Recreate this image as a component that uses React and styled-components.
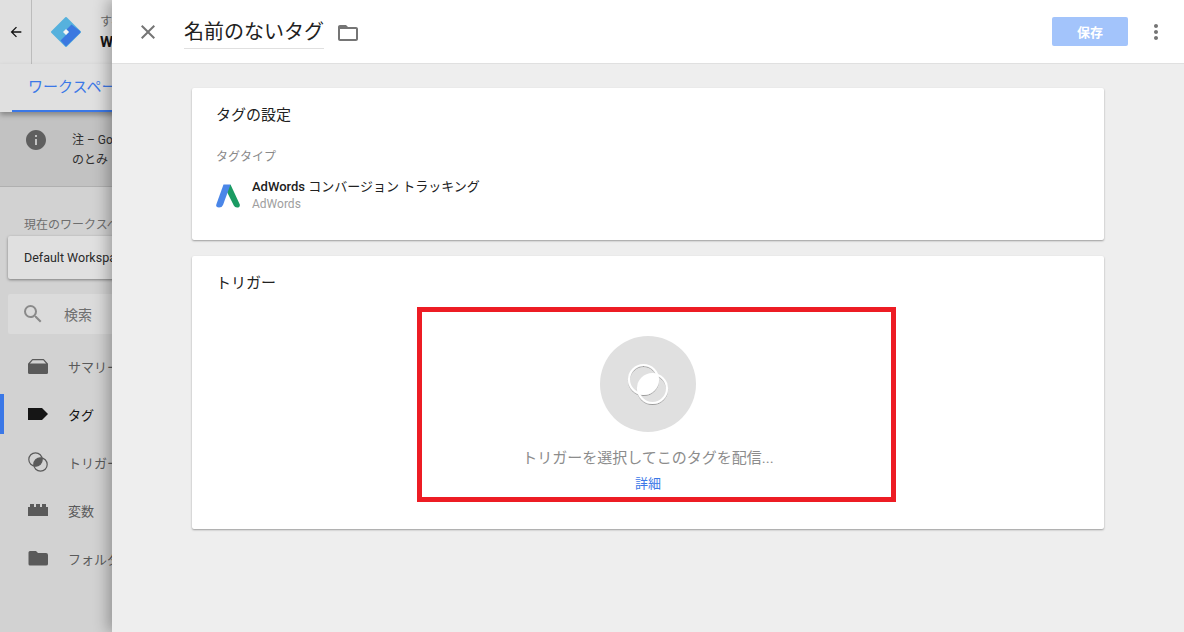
import React from "react";
import styled, { createGlobalStyle } from "styled-components";

const GlobalStyle = createGlobalStyle`
  html, body {
    margin: 0;
    padding: 0;
    height: 100%;
    overflow: hidden;
  }
  body {
    font-family: Roboto, "Noto Sans CJK JP", sans-serif;
    color: #212121;
  }
  #root {
    height: 100%;
  }
`;

const Page = styled.div`
  position: relative;
  width: 1184px;
  height: 632px;
  overflow: hidden;
  background: #d2d2d2;
`;

const TopBar = styled.div`
  display: flex;
  align-items: center;
  height: 64px;
  background: #e0e0e0;
`;

const BackCell = styled.div`
  display: flex;
  align-items: center;
  justify-content: center;
  width: 31px;
  height: 64px;
  border-right: 1px solid #bcbcbc;
  color: #111;
`;

const Logo = styled.div`
  display: flex;
  margin-left: 18px;
  margin-right: 18px;
`;

const Crumbs = styled.div`
  display: flex;
  flex-direction: column;
  gap: 3px;
  white-space: nowrap;
`;

const CrumbTop = styled.div`
  font-size: 12px;
  line-height: 16px;
  color: #6a6a6a;
`;

const CrumbName = styled.div`
  font-size: 15px;
  line-height: 18px;
  font-weight: 700;
  color: #151515;
`;

const Tabs = styled.div`
  height: 48px;
  background: #e0e0e0;
  box-shadow: 0 3px 5px rgba(0, 0, 0, 0.3);
  position: relative;
  padding-left: 12px;
`;

const Tab = styled.div`
  width: 180px;
  height: 48px;
  box-sizing: border-box;
  padding: 13px 0 0 16px;
  font-size: 15px;
  line-height: 20px;
  color: #3b78e7;
  border-bottom: 2px solid #3b78e7;
  white-space: nowrap;
`;

const Notice = styled.div`
  display: flex;
  height: 75px;
  box-sizing: border-box;
  padding: 16px 0 0 24px;
  background: #c2c2c2;
  border-bottom: 1px solid #b0b0b0;
  white-space: nowrap;
`;

const NoticeText = styled.div`
  margin-left: 24px;
  padding-top: 2px;
  font-size: 12px;
  line-height: 20px;
  color: #303030;
`;

const Side = styled.div`
  padding: 29px 0 0;
`;

const SideLabel = styled.div`
  padding-left: 24px;
  font-size: 12px;
  line-height: 18px;
  color: #6e6e6e;
  white-space: nowrap;
`;

const WorkspaceCard = styled.div`
  margin: 2px 0 0 8px;
  width: 300px;
  height: 43px;
  box-sizing: border-box;
  padding-left: 16px;
  padding-bottom: 1px;
  display: flex;
  align-items: center;
  background: #e0e0e0;
  border-radius: 2px;
  box-shadow: 0 1px 3px rgba(0, 0, 0, 0.4);
  font-size: 12.5px;
  color: #2a2a2a;
  white-space: nowrap;
`;

const SearchBox = styled.div`
  margin: 15px 0 0 8px;
  width: 300px;
  height: 40px;
  box-sizing: border-box;
  display: flex;
  align-items: center;
  gap: 19px;
  padding-left: 13px;
  background: #dbdbdb;
  border-radius: 2px;
  font-size: 14px;
  color: #6e6e6e;
`;

const NavList = styled.div`
  margin-top: 8px;
`;

const NavItem = styled.div`
  position: relative;
  display: flex;
  align-items: center;
  gap: 20px;
  height: 48px;
  padding-left: 28px;
  font-size: 13px;
  color: ${(p) => (p.$active ? "#151515" : "#5a5a5a")};
  white-space: nowrap;

  &::before {
    content: "";
    display: ${(p) => (p.$active ? "block" : "none")};
    position: absolute;
    left: 0;
    top: 4px;
    width: 4px;
    height: 40px;
    background: #3b78e7;
  }
`;

const Panel = styled.div`
  position: absolute;
  top: 0;
  right: 0;
  bottom: 0;
  left: 112px;
  display: flex;
  flex-direction: column;
  background: #eeeeee;
  box-shadow: -4px 0 14px rgba(0, 0, 0, 0.3);
`;

const PanelHeader = styled.div`
  display: flex;
  align-items: center;
  height: 64px;
  box-sizing: border-box;
  padding: 0 16px 0 24px;
  background: #fff;
  border-bottom: 1px solid #e0e0e0;
`;

const IconButton = styled.div`
  display: flex;
  align-items: center;
  justify-content: center;
  width: 24px;
  height: 24px;
  color: ${(p) => p.$color || "#757575"};
`;

const TagName = styled.div`
  margin-left: 24px;
  margin-top: -1px;
  width: 140px;
  height: 34px;
  font-size: 20px;
  line-height: 36px;
  color: #212121;
  border-bottom: 1px solid #e0e0e0;
`;

const FolderIcon = styled(IconButton)`
  margin-left: 12px;
  margin-top: 2px;
`;

const SaveButton = styled.div`
  margin-left: auto;
  margin-right: 16px;
  display: flex;
  align-items: center;
  justify-content: center;
  width: 76px;
  height: 29px;
  background: #a3c4fb;
  border-radius: 2px;
  color: #fff;
  font-size: 13px;
  font-weight: 700;
`;

const PanelBody = styled.div`
  flex: 1;
  display: flex;
  flex-direction: column;
  gap: 16px;
  padding: 24px 80px;
`;

const Card = styled.div`
  position: relative;
  height: ${(p) => p.$height}px;
  box-sizing: border-box;
  padding: 17px 24px;
  background: #fff;
  border-radius: 2px;
  box-shadow: 0 1px 2px rgba(0, 0, 0, 0.35);
`;

const CardTitle = styled.div`
  font-size: 15px;
  line-height: 20px;
  color: #212121;
`;

const FieldLabel = styled.div`
  margin-top: 24px;
  font-size: 12px;
  line-height: 16px;
  color: #8a8a8a;
`;

const TagType = styled.div`
  display: flex;
  align-items: center;
  gap: 12px;
  margin-top: 13px;
`;

const TagTypeIcon = styled.div`
  display: flex;
  margin-top: 2px;
`;

const TagTypeName = styled.div`
  font-size: 13px;
  line-height: 17px;
  color: #212121;

  b {
    font-weight: 500;
  }
`;

const TagTypeVendor = styled.div`
  margin-top: 1px;
  font-size: 12px;
  line-height: 16px;
  color: #9e9e9e;
`;

const EmptyState = styled.div`
  display: flex;
  flex-direction: column;
  align-items: center;
  margin-top: 43px;
`;

const EmptyCircle = styled.div`
  display: flex;
  align-items: center;
  justify-content: center;
  width: 96px;
  height: 96px;
  border-radius: 50%;
  background: #e0e0e0;
`;

const EmptyText = styled.div`
  margin-top: 15px;
  font-size: 15px;
  line-height: 22px;
  color: #8c8c8c;
`;

const MoreLink = styled.a`
  margin-top: 6px;
  font-size: 13px;
  line-height: 18px;
  color: #3b78e7;
`;

const Highlight = styled.div`
  position: absolute;
  left: 225px;
  top: 51px;
  width: 479px;
  height: 195px;
  box-sizing: border-box;
  border: 5px solid #ed1c24;
  pointer-events: none;
`;

const Icon = ({ d, size = 24, color = "currentColor" }) => (
  <svg width={size} height={size} viewBox="0 0 24 24" fill={color}>
    <path d={d} />
  </svg>
);

const TagManagerLogo = () => (
  <svg width="32" height="32" viewBox="0 0 32 32">
    <path d="M16 2 L30 16 L16 30 L2 16 Z" fill="#56b1dd" stroke="#56b1dd" strokeWidth="2" strokeLinejoin="round" />
    <path d="M21.5 8.5 L16.5 13.5 L19 16 L16 19 L10.5 24.5 L15 29.5 Q16 31 17 29.5 L30 17 Q31 16 30 15 Z" fill="#3b78e0" />
    <path d="M16 13 L19 16 L16 19 L13 16 Z" fill="#f4f4f4" />
  </svg>
);

const AdWordsLogo = () => (
  <svg width="24" height="24" viewBox="0 0 24 24">
    <path d="M14.5 0.5 L23.8 20.5 Q24.2 23.5 21 23.5 Q18.8 23.5 17.8 21.5 L10 6 Z" fill="#1a9b62" />
    <path d="M7.5 0.5 H14.5 L7 21 Q6 23.5 3 23.5 Q-0.2 23.5 0.3 20.5 Z" fill="#4a86e8" />
  </svg>
);

const SummaryIcon = () => (
  <svg width="20" height="15" viewBox="0 0 20 15">
    <path d="M4.5 0.6 H15.5 L19.4 5 H0.6 Z" fill="none" stroke="#5a5a5a" strokeWidth="1.2" strokeLinejoin="round" />
    <path d="M0 5 H20 V13.5 Q20 15 18.5 15 H1.5 Q0 15 0 13.5 Z" fill="#5a5a5a" />
  </svg>
);

const TagIcon = () => (
  <svg width="20" height="12" viewBox="0 0 20 12" fill="#151515">
    <path d="M0 0 H14 L20 6 L14 12 H0 Z" />
  </svg>
);

const TriggerIcon = () => (
  <svg width="20" height="20" viewBox="0 0 20 20">
    <circle cx="7.5" cy="7.5" r="6.7" fill="none" stroke="#5a5a5a" strokeWidth="1.2" />
    <circle cx="12.5" cy="12.5" r="6.7" fill="none" stroke="#5a5a5a" strokeWidth="1.2" />
    <path d="M5.98 14.02 A6.7 6.7 0 0 1 14.02 5.98 A6.7 6.7 0 0 1 5.98 14.02 Z" fill="#5a5a5a" />
  </svg>
);

const VariableIcon = () => (
  <svg width="20" height="12" viewBox="0 0 20 12" fill="#5a5a5a">
    <path d="M0 3 H2 V0 H6 V3 H8 V0 H12 V3 H14 V0 H18 V3 H20 V12 H0 Z" />
  </svg>
);

const FolderFill = () => (
  <svg width="20" height="16" viewBox="0 0 20 16" fill="#5a5a5a">
    <path d="M2 1 H8 L10 3 H18 Q20 3 20 5 V14 Q20 15.5 18 15.5 H2 Q0.5 15.5 0.5 14 V2.5 Q0.5 1 2 1 Z" />
  </svg>
);

const EmptyTriggerIcon = () => (
  <svg width="44" height="44" viewBox="0 0 44 44">
    <defs>
      <filter id="ringShadow" x="-20%" y="-20%" width="140%" height="140%">
        <feDropShadow dx="0" dy="1" stdDeviation="0.7" floodColor="#000" floodOpacity="0.3" />
      </filter>
    </defs>
    <g filter="url(#ringShadow)">
      <circle cx="17.5" cy="17.5" r="14.5" fill="none" stroke="#fff" strokeWidth="2.2" />
      <circle cx="26.5" cy="26.5" r="14.5" fill="none" stroke="#fff" strokeWidth="2.2" />
      <path d="M12.8 31.2 A14.5 14.5 0 0 1 31.2 12.8 A14.5 14.5 0 0 1 12.8 31.2 Z" fill="#fff" />
    </g>
  </svg>
);

const navItems = [
  { label: "サマリー", icon: <SummaryIcon /> },
  { label: "タグ", icon: <TagIcon />, active: true },
  { label: "トリガー", icon: <TriggerIcon /> },
  { label: "変数", icon: <VariableIcon /> },
  { label: "フォルダ", icon: <FolderFill /> },
];

export default function App() {
  return (
    <Page>
      <GlobalStyle />
      <TopBar>
        <BackCell>
          <Icon size={16} d="M20 11H7.83l5.59-5.59L12 4l-8 8 8 8 1.41-1.41L7.83 13H20v-2z" />
        </BackCell>
        <Logo>
          <TagManagerLogo />
        </Logo>
        <Crumbs>
          <CrumbTop>すべて</CrumbTop>
          <CrumbName>Website</CrumbName>
        </Crumbs>
      </TopBar>
      <Tabs>
        <Tab>ワークスペース</Tab>
      </Tabs>
      <Notice>
        <Icon size={24} color="#5f5f5f" d="M12 2C6.48 2 2 6.48 2 12s4.48 10 10 10 10-4.48 10-10S17.52 2 12 2zm1 15h-2v-6h2v6zm0-8h-2V7h2v2z" />
        <NoticeText>
          注 – Google
          <br />
          のとみ
        </NoticeText>
      </Notice>
      <Side>
        <SideLabel>現在のワークスペース</SideLabel>
        <WorkspaceCard>Default Workspace</WorkspaceCard>
        <SearchBox>
          <Icon color="#8a8a8a" d="M15.5 14h-.79l-.28-.27A6.471 6.471 0 0 0 16 9.5 6.5 6.5 0 1 0 9.5 16c1.61 0 3.09-.59 4.23-1.57l.27.28v.79l5 4.99L20.49 19l-4.99-5zm-6 0C7.01 14 5 11.99 5 9.5S7.01 5 9.5 5 14 7.01 14 9.5 11.99 14 9.5 14z" />
          検索
        </SearchBox>
        <NavList>
          {navItems.map((item) => (
            <NavItem key={item.label} $active={item.active}>
              {item.icon}
              {item.label}
            </NavItem>
          ))}
        </NavList>
      </Side>
      <Panel>
        <PanelHeader>
          <IconButton>
            <Icon d="M19 6.41L17.59 5 12 10.59 6.41 5 5 6.41 10.59 12 5 17.59 6.41 19 12 13.41 17.59 19 19 17.59 13.41 12z" />
          </IconButton>
          <TagName>名前のないタグ</TagName>
          <FolderIcon>
            <Icon d="M20 6h-8l-2-2H4c-1.1 0-1.99.9-1.99 2L2 18c0 1.1.9 2 2 2h16c1.1 0 2-.9 2-2V8c0-1.1-.9-2-2-2zm0 12H4V8h16v10z" />
          </FolderIcon>
          <SaveButton>保存</SaveButton>
          <IconButton>
            <Icon d="M12 8c1.1 0 2-.9 2-2s-.9-2-2-2-2 .9-2 2 .9 2 2 2zm0 2c-1.1 0-2 .9-2 2s.9 2 2 2 2-.9 2-2-.9-2-2-2zm0 6c-1.1 0-2 .9-2 2s.9 2 2 2 2-.9 2-2-.9-2-2-2z" />
          </IconButton>
        </PanelHeader>
        <PanelBody>
          <Card $height={152}>
            <CardTitle>タグの設定</CardTitle>
            <FieldLabel>タグタイプ</FieldLabel>
            <TagType>
              <TagTypeIcon>
                <AdWordsLogo />
              </TagTypeIcon>
              <div>
                <TagTypeName>
                  <b>AdWords</b> コンバージョン トラッキング
                </TagTypeName>
                <TagTypeVendor>AdWords</TagTypeVendor>
              </div>
            </TagType>
          </Card>
          <Card $height={273}>
            <CardTitle>トリガー</CardTitle>
            <EmptyState>
              <EmptyCircle>
                <EmptyTriggerIcon />
              </EmptyCircle>
              <EmptyText>トリガーを選択してこのタグを配信...</EmptyText>
              <MoreLink>詳細</MoreLink>
            </EmptyState>
            <Highlight />
          </Card>
        </PanelBody>
      </Panel>
    </Page>
  );
}
